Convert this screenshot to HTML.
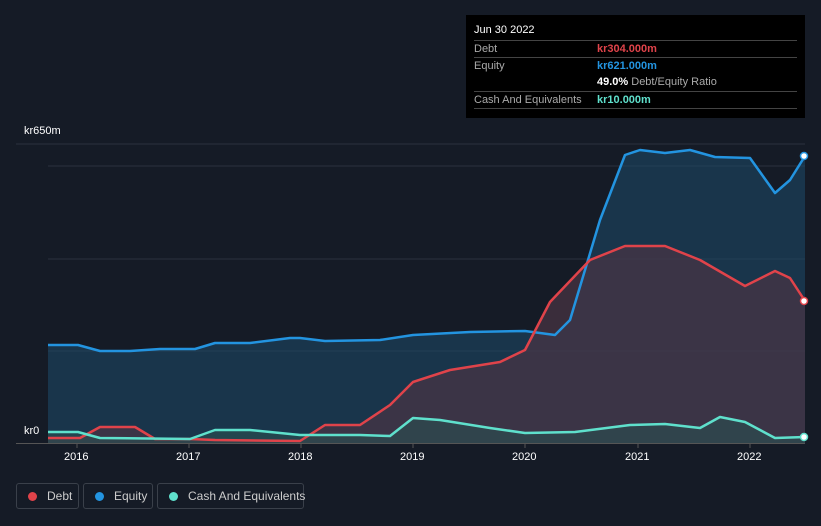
<!DOCTYPE html>
<html><head><meta charset="utf-8"><style>
html,body{margin:0;width:821px;height:526px;overflow:hidden}
body{background:#151b26;font-family:"Liberation Sans",sans-serif;position:relative}
.tip{position:absolute;left:466px;top:15px;width:339px;height:103px;background:#000;color:#fff;font-size:11px}
.row{position:absolute;left:8px;right:8px;height:17px;border-top:1px solid #444;line-height:17px}
.l{color:#aaa;position:absolute;left:0}
.v{position:absolute;left:123px;font-weight:bold;white-space:nowrap}
.leg{position:absolute;top:483px;height:26px;border:1px solid #3a404a;border-radius:3px;color:#ccc;font-size:12px;line-height:24px;box-sizing:border-box;white-space:nowrap}
.leg i{display:inline-block;width:9px;height:9px;border-radius:50%;margin:0 10px 0 11px;vertical-align:-1px}
.ax{position:absolute;color:#fff;font-size:11px}
</style></head><body>
<svg width="821" height="526" style="position:absolute;left:0;top:0">
<g stroke="#2a313d" stroke-width="1">
<line x1="16" y1="144" x2="805" y2="144"/><line x1="48" y1="166" x2="805" y2="166"/><line x1="48" y1="259" x2="805" y2="259"/><line x1="48" y1="351" x2="805" y2="351"/>
<line x1="16" y1="443.5" x2="805" y2="443.5" stroke="#555"/>
</g>
<g stroke="#555"><line x1="77" y1="443" x2="77" y2="448"/><line x1="189" y1="443" x2="189" y2="448"/><line x1="301" y1="443" x2="301" y2="448"/><line x1="413" y1="443" x2="413" y2="448"/><line x1="525" y1="443" x2="525" y2="448"/><line x1="638" y1="443" x2="638" y2="448"/><line x1="750" y1="443" x2="750" y2="448"/></g>
<polygon fill="#1e4a6a" fill-opacity="0.55" points="48,443 48,345 78,345 100,351 130,351 160,349 195,349 215,343 250,343 290,338 300,338 325,341 380,340 413,335 470,332 525,331 555,335 570,320 600,220 625,155 640,150 665,153 690,150 715,157 750,158 775,193 790,180 805,156 805,443"/>
<polygon fill="#4a3545" fill-opacity="0.7" points="48,443 48,438 80,438 100,427 135,427 155,439 190,439 215,440 300,441 325,425 360,425 390,405 413,382 450,370 500,362 525,350 550,302 590,260 625,246 665,246 700,260 745,286 775,271 790,278 805,301 805,443"/>
<polygon fill="#2a5050" fill-opacity="0.6" points="48,443 48,432 78,432 100,438 190,439 215,430 250,430 300,435 360,435 390,436 413,418 440,420 490,428 525,433 575,432 630,425 665,424 700,428 720,417 745,422 775,438 805,437 805,443"/>
<g fill="none" stroke-width="2.5" stroke-linejoin="round">
<polyline stroke="#2394e0" points="48,345 78,345 100,351 130,351 160,349 195,349 215,343 250,343 290,338 300,338 325,341 380,340 413,335 470,332 525,331 555,335 570,320 600,220 625,155 640,150 665,153 690,150 715,157 750,158 775,193 790,180 805,156"/>
<polyline stroke="#e0434a" points="48,438 80,438 100,427 135,427 155,439 190,439 215,440 300,441 325,425 360,425 390,405 413,382 450,370 500,362 525,350 550,302 590,260 625,246 665,246 700,260 745,286 775,271 790,278 805,301"/>
<polyline stroke="#5fe0cc" points="48,432 78,432 100,438 190,439 215,430 250,430 300,435 360,435 390,436 413,418 440,420 490,428 525,433 575,432 630,425 665,424 700,428 720,417 745,422 775,438 805,437"/>
</g>
<circle cx="804" cy="156" r="3.5" fill="#fff" stroke="#2394e0" stroke-width="1.5"/>
<circle cx="804" cy="301" r="3.5" fill="#fff" stroke="#e0434a" stroke-width="1.5"/>
<circle cx="804" cy="437" r="3.5" fill="#fff" stroke="#5fe0cc" stroke-width="1.5"/>
</svg>
<div class="ax" style="left:24px;top:125px">kr650m</div>
<div class="ax" style="background:#151b26;padding:5px 8px;left:16px;top:420px">kr0</div>
<div class="ax" style="left:64px;top:451px">2016</div><div class="ax" style="left:176px;top:451px">2017</div><div class="ax" style="left:288px;top:451px">2018</div><div class="ax" style="left:400px;top:451px">2019</div><div class="ax" style="left:512px;top:451px">2020</div><div class="ax" style="left:625px;top:451px">2021</div><div class="ax" style="left:737px;top:451px">2022</div>
<div class="tip">
<div style="position:absolute;left:8px;top:9px;font-size:11px">Jun 30 2022</div>
<div class="row" style="top:25px"><span class="l">Debt</span><span class="v" style="color:#e0434a">kr304.000m</span></div>
<div class="row" style="top:42px"><span class="l">Equity</span><span class="v" style="color:#2394e0">kr621.000m</span></div>
<div class="row" style="top:59px;border:0"><span class="v" style="color:#fff">49.0% <span style="color:#aaa;font-weight:normal">Debt/Equity Ratio</span></span></div>
<div class="row" style="top:76px"><span class="l">Cash And Equivalents</span><span class="v" style="color:#5fe0cc">kr10.000m</span></div>
<div class="row" style="top:93px;height:0"></div>
</div>
<div class="leg" style="left:16px;width:63px"><i style="background:#e0434a"></i>Debt</div>
<div class="leg" style="left:83px;width:70px"><i style="background:#2394e0"></i>Equity</div>
<div class="leg" style="left:157px;width:147px"><i style="background:#5fe0cc"></i>Cash And Equivalents</div>
</body></html>
